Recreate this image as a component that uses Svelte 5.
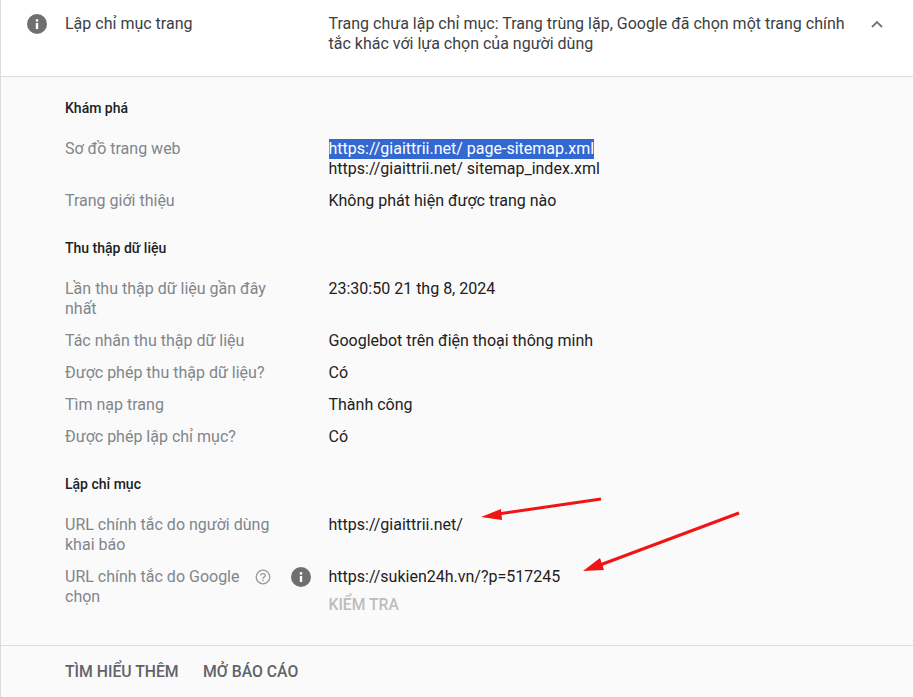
<script lang="ts">
  type Row = {
    label: string;
    values: string[];
    hint?: boolean;
    action?: string;
    selected?: boolean;
  };
  type Section = { title: string; rows: Row[] };

  const sections: Section[] = [
    {
      title: 'Khám phá',
      rows: [
        {
          label: 'Sơ đồ trang web',
          values: ['https://giaittrii.net/ page-sitemap.xml', 'https://giaittrii.net/ sitemap_index.xml'],
          selected: true
        },
        { label: 'Trang giới thiệu', values: ['Không phát hiện được trang nào'] }
      ]
    },
    {
      title: 'Thu thập dữ liệu',
      rows: [
        { label: 'Lần thu thập dữ liệu gần đây nhất', values: ['23:30:50 21 thg 8, 2024'] },
        { label: 'Tác nhân thu thập dữ liệu', values: ['Googlebot trên điện thoại thông minh'] },
        { label: 'Được phép thu thập dữ liệu?', values: ['Có'] },
        { label: 'Tìm nạp trang', values: ['Thành công'] },
        { label: 'Được phép lập chỉ mục?', values: ['Có'] }
      ]
    },
    {
      title: 'Lập chỉ mục',
      rows: [
        { label: 'URL chính tắc do người dùng khai báo', values: ['https://giaittrii.net/'] },
        {
          label: 'URL chính tắc do Google chọn',
          values: ['https://sukien24h.vn/?p=517245'],
          hint: true,
          action: 'KIỂM TRA'
        }
      ]
    }
  ];
</script>

{#snippet infoIcon()}
  <svg class="info" viewBox="0 0 20 20" width="20" height="20" aria-hidden="true">
    <circle cx="10" cy="10" r="10" fill="#6f6f6f" />
    <rect x="8.8" y="9" width="2.4" height="6" fill="#fff" />
    <rect x="8.8" y="5.2" width="2.4" height="2.4" fill="#fff" />
  </svg>
{/snippet}

<div class="panel">
  <header class="head">
    <span class="head-icon">{@render infoIcon()}</span>
    <span class="head-title">Lập chỉ mục trang</span>
    <span class="head-text">Trang chưa lập chỉ mục: Trang trùng lặp, Google đã chọn một trang chính tắc khác với lựa chọn của người dùng</span>
    <svg class="chevron" viewBox="0 0 12 8" width="12" height="8" aria-hidden="true">
      <path d="M1 7 L6 2 L11 7" fill="none" stroke="#757575" stroke-width="1.8" />
    </svg>
  </header>

  <div class="body">
    {#each sections as section}
      <section>
        <h3>{section.title}</h3>
        <div class="rows">
          {#each section.rows as row}
            <div class="row">
              <div class="label">
                <span class="label-text">{row.label}</span>
                {#if row.hint}
                  <svg class="hint" viewBox="0 0 16 16" width="16" height="16" aria-hidden="true">
                    <circle cx="8" cy="8" r="6.8" fill="none" stroke="#9a9a9a" stroke-width="1.3" />
                    <path d="M5.7 6.4 C5.7 3.9 10.3 3.9 10.3 6.4 C10.3 7.9 8 7.9 8 9.8" fill="none" stroke="#9a9a9a" stroke-width="1.3" />
                    <rect x="7.3" y="10.7" width="1.4" height="1.4" fill="#9a9a9a" />
                  </svg>
                  <span class="row-info">{@render infoIcon()}</span>
                {/if}
              </div>
              <div class="value">
                {#each row.values as v, i}
                  <div><span class:selected={row.selected && i === 0}>{v}</span></div>
                {/each}
                {#if row.action}
                  <div class="action">{row.action}</div>
                {/if}
              </div>
            </div>
          {/each}
        </div>
      </section>
    {/each}
  </div>

  <footer class="foot">
    <span>TÌM HIỂU THÊM</span>
    <span>MỞ BÁO CÁO</span>
  </footer>

  <!-- annotation arrows drawn over the screenshot -->
  <svg class="arrows" viewBox="0 0 914 697" width="914" height="697" aria-hidden="true">
    <path d="M601 499 L498 514" stroke="#f01414" stroke-width="3" fill="none" />
    <path d="M481 517 L501 509 L502 520 Z" fill="#f01414" />
    <path d="M739 513 L600 565" stroke="#f01414" stroke-width="3" fill="none" />
    <path d="M583 571 L600 558 L604 570 Z" fill="#f01414" />
  </svg>
</div>

<style>
  :global(body) {
    margin: 0;
    background: #fff;
  }

  .panel {
    position: relative;
    width: 914px;
    height: 697px;
    box-sizing: border-box;
    overflow: hidden;
    border-left: 1px solid #dadce0;
    border-right: 1px solid #dadce0;
    font-family: Roboto, 'Liberation Sans', sans-serif;
    font-size: 16px;
    line-height: 20px;
    color: #212121;
  }

  .head {
    display: grid;
    grid-template-columns: 38px 263.5px 1fr;
    padding: 14px 0 0 26px;
    height: 77px;
    box-sizing: border-box;
    background: #fff;
    border-bottom: 1px solid #dadce0;
    position: relative;
  }

  .head-icon {
    height: 20px;
  }

  .info {
    display: block;
  }

  .head-title {
    color: #3c4043;
  }

  .head-text {
    width: 530px;
    color: #3c4043;
  }

  .chevron {
    position: absolute;
    right: 30px;
    top: 20px;
  }

  .body {
    background: #fafafa;
    padding: 21px 0 0 64px;
    height: 569px;
    box-sizing: border-box;
    border-bottom: 1px solid #dadce0;
  }

  section {
    margin-bottom: 27px;
  }

  h3 {
    margin: 0 0 21px;
    font-size: 14px;
    font-weight: 500;
    line-height: 20px;
    color: #202124;
  }

  .rows {
    display: grid;
    gap: 12px;
  }

  .row {
    display: grid;
    grid-template-columns: 263.5px 1fr;
  }

  .label {
    color: #80868b;
    position: relative;
    width: 206px;
  }

  .hint {
    position: absolute;
    left: 190px;
    top: 2px;
  }

  .row-info {
    position: absolute;
    left: 225.5px;
    top: 0;
  }

  .value {
    color: #212121;
  }

  .selected {
    display: inline-block;
    background: #3367d1;
    color: #fff;
  }

  .action {
    margin-top: 8px;
    color: #bdbdbd;
    font-weight: 500;
    font-size: 15.7px;
  }

  .foot {
    display: flex;
    gap: 24.5px;
    padding: 16px 0 0 64px;
    background: #fafafa;
    height: 52px;
    box-sizing: border-box;
    color: #5f6368;
    font-size: 15.75px;
    font-weight: 500;
  }

  .arrows {
    position: absolute;
    left: -1px;
    top: 0;
    pointer-events: none;
  }
</style>
